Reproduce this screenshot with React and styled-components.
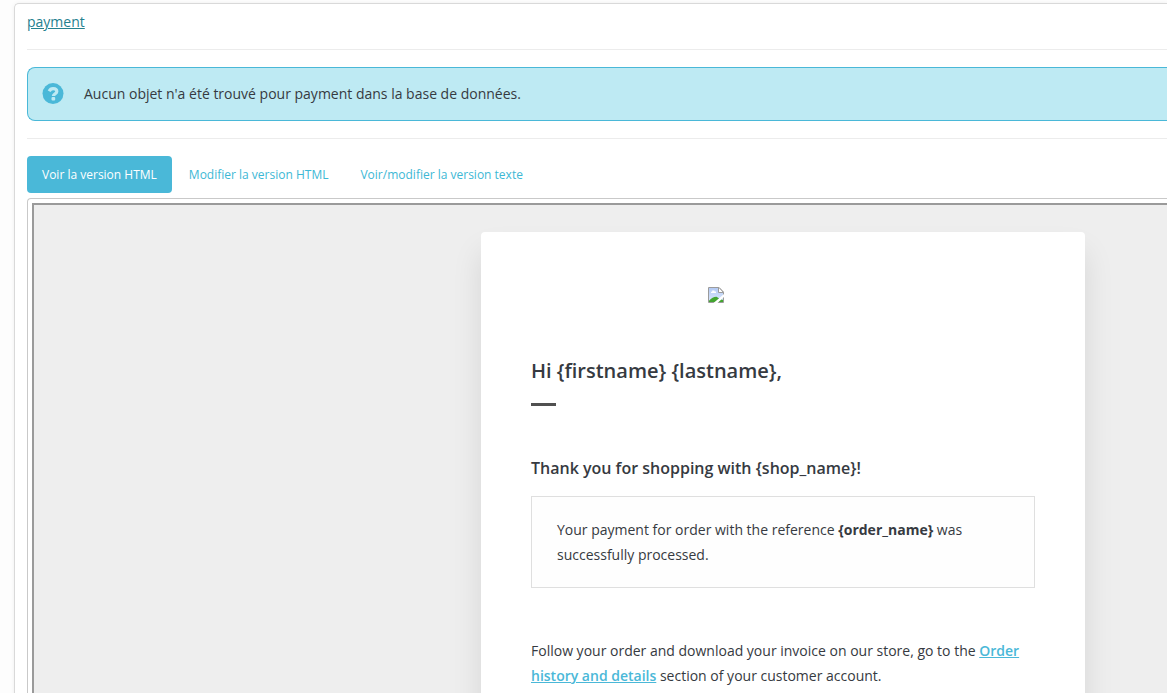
import React from "react";
import styled, { createGlobalStyle, css } from "styled-components";

const GlobalStyle = createGlobalStyle`
  * {
    box-sizing: border-box;
  }

  body {
    background: #fdfdfd;
    color: #363a41;
    font-family: "Open Sans", "Noto Sans", sans-serif;
    font-size: 14px;
    margin: 0;
  }
`;

const Page = styled.main`
  display: flex;
  height: 100vh;
  overflow: hidden;
  padding: 3px 0 0 14px;
`;

const Panel = styled.section`
  background: #fff;
  border: solid #d9d9d9;
  border-radius: 5px 0 0 0;
  border-width: 1px 0 0 1px;
  box-shadow: 0 0 4px rgba(0, 0, 0, 0.06);
  flex: 1;
  height: max-content;
  min-width: 0;
  padding: 8px 0 0 12px;
`;

const TemplateLink = styled.a`
  color: #25818f;
  display: inline-block;
  line-height: 20px;
`;

const Divider = styled.hr`
  border: 0;
  border-top: 1px solid #ececec;
  margin: 17px 0;
`;

const Alert = styled.div`
  align-items: center;
  background: #beeaf3;
  border: solid #4ab8d8;
  border-radius: 8px 0 0 8px;
  border-width: 1px 0 1px 1px;
  display: flex;
  gap: 20px;
  height: 54px;
  padding: 0 14px;
`;

const AlertText = styled.p`
  line-height: 20px;
  margin: 0;
`;

const Tabs = styled.div`
  display: flex;
  gap: 2px;
  margin-bottom: 5px;
`;

const Tab = styled.button`
  background: transparent;
  border: 0;
  border-radius: 4px;
  color: #3db8d5;
  cursor: pointer;
  font: inherit;
  font-size: 12px;
  height: 37px;
  padding: 0 15px;
  white-space: nowrap;

  ${({ $active }) =>
    $active &&
    css`
      background: #4ab8d8;
      color: #fff;
    `};
`;

const Preview = styled.div`
  border: solid #c9c9c9;
  border-radius: 4px 0 0 0;
  border-width: 1px 0 0 1px;
  padding: 4px 0 0 4px;
`;

const PreviewBody = styled.div`
  background: #eee;
  border: solid #9a9a9a;
  border-width: 2px 0 0 2px;
  display: flex;
  justify-content: flex-end;
  overflow: hidden;
  padding: 27px 82px 50px 50px;
`;

const Email = styled.article`
  background: #fff;
  border-radius: 4px;
  box-shadow: 0 20px 30px rgba(0, 0, 0, 0.1);
  max-width: 604px;
  padding: 55px 50px;
  width: 100%;
`;

const Logo = styled.div`
  display: flex;
  margin: 0 auto;
  width: 150px;
`;

const Greeting = styled.h1`
  font-size: 20px;
  font-weight: 600;
  line-height: 25px;
  margin: 55px 0 20px;
`;

const Accent = styled.div`
  background: #505050;
  height: 3px;
  width: 25px;
`;

const Thanks = styled.h2`
  font-size: 16px;
  font-weight: 600;
  line-height: 25px;
  margin: 50px 0 15px;
`;

const Notice = styled.div`
  background: #fefefe;
  border: 1px solid #dfdfdf;
  margin-bottom: 50px;
  padding: 20px 25px;
`;

const Text = styled.p`
  line-height: 25px;
  margin: 0;
`;

const OrderLink = styled.a`
  color: #4ab8d8;
  font-weight: 600;
`;

const HelpIcon = () => (
  <svg width="22" height="22" viewBox="0 0 22 22" aria-hidden="true">
    <circle cx="11" cy="10.6" r="10.5" fill="#4ab8d8" />
    <path
      d="M7.2 8.2C8 6.5 9.3 5.7 11.1 5.7c2.1 0 3.7 1.1 3.7 2.9 0 2.4-3.4 2.3-3.4 4.5"
      fill="none"
      stroke="#beeaf3"
      strokeWidth="3.2"
    />
    <rect x="9.5" y="14" width="3.7" height="3.5" rx="1" fill="#beeaf3" />
  </svg>
);

const BrokenImageIcon = () => (
  <svg width="16" height="16" viewBox="0 0 16 16" role="img" aria-label="Logo">
    <defs>
      <linearGradient id="sky" x1="0" y1="0" x2="0" y2="1">
        <stop offset="0" stopColor="#b4caf4" />
        <stop offset="1" stopColor="#dce8fb" />
      </linearGradient>
    </defs>
    <path d="M0.5 0.5h10.5l4.5 4.5v10.5H0.5z" fill="#fff" stroke="#9b9b9b" />
    <path d="M1 1h10v4.5h4V15H1z" fill="url(#sky)" />
    <path d="M3 6V4.7h1.2V3.5h2.3v1H8V6z" fill="#fff" />
    <path d="M1 15v-1.2C3.5 10.8 6 9.7 8.5 9.8L12 12l3 1v2z" fill="#43a52f" />
    <path d="M10.5 0.5V5.5h5L11 0.5z" fill="#fff" stroke="#9b9b9b" />
    <path d="M16 7v3L9.5 16H5.5L12 10.5z" fill="#fff" />
  </svg>
);

const App = () => (
  <>
    <GlobalStyle />
    <Page>
      <Panel>
        <TemplateLink href="#payment">payment</TemplateLink>
        <Divider />
        <Alert role="status">
          <HelpIcon />
          <AlertText>
            Aucun objet n'a été trouvé pour payment dans la base de données.
          </AlertText>
        </Alert>
        <Divider />
        <Tabs role="tablist">
          <Tab type="button" role="tab" aria-selected="true" $active>
            Voir la version HTML
          </Tab>
          <Tab type="button" role="tab" aria-selected="false">
            Modifier la version HTML
          </Tab>
          <Tab type="button" role="tab" aria-selected="false">
            Voir/modifier la version texte
          </Tab>
        </Tabs>
        <Preview>
          <PreviewBody>
            <Email>
              <Logo>
                <BrokenImageIcon />
              </Logo>
              <Greeting>{"Hi {firstname} {lastname},"}</Greeting>
              <Accent />
              <Thanks>{"Thank you for shopping with {shop_name}!"}</Thanks>
              <Notice>
                <Text>
                  Your payment for order with the reference{" "}
                  <strong>{"{order_name}"}</strong> was successfully processed.
                </Text>
              </Notice>
              <Text>
                Follow your order and download your invoice on our store, go to
                the <OrderLink href="#orders">Order history and details</OrderLink>{" "}
                section of your customer account.
              </Text>
            </Email>
          </PreviewBody>
        </Preview>
      </Panel>
    </Page>
  </>
);

export default App;
